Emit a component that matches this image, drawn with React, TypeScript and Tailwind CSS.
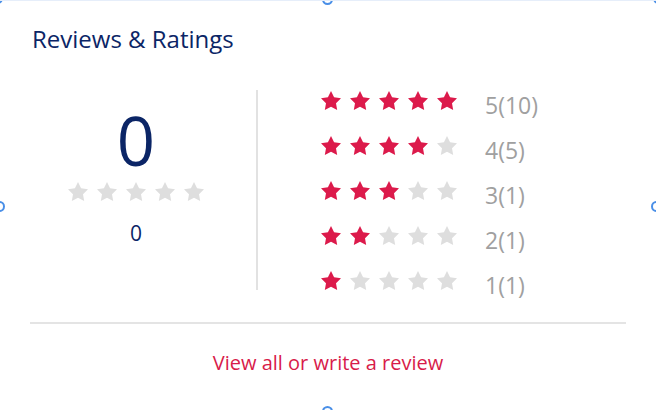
import React from "react";

const STAR =
  "M12 2l3.09 6.26L22 9.27l-5 4.87 1.18 6.88L12 17.77l-6.18 3.25L7 14.14 2 9.27l6.91-1.01L12 2z";

function Star({ filled, size = 24 }: { filled: boolean; size?: number }) {
  return (
    <svg width={size} height={size} viewBox="0 0 24 24" className="shrink-0">
      <path d={STAR} fill={filled ? "#dc1a4b" : "#dedede"} />
    </svg>
  );
}

const rows = [
  { stars: 5, label: "5(10)" },
  { stars: 4, label: "4(5)" },
  { stars: 3, label: "3(1)" },
  { stars: 2, label: "2(1)" },
  { stars: 1, label: "1(1)" },
];

function Handle({ className }: { className: string }) {
  return (
    <div
      className={`absolute w-[11px] h-[11px] rounded-full border-2 border-[#4a8fe7] bg-white ${className}`}
    />
  );
}

export default function App() {
  return (
    <div
      className="relative w-[656px] h-[410px] overflow-hidden bg-white border-t border-[#e6eefa]"
      style={{ fontFamily: '"Open Sans", "Noto Sans", sans-serif' }}
    >
      <div className="flex flex-col h-full px-[30px]">
        <h1 className="pt-[22px] pl-[2px] text-[24px] leading-[32px] text-[#0b2566]">
          Reviews &amp; Ratings
        </h1>

        <div className="flex mt-[35px] h-[200px]">
          <div className="w-[212px] flex flex-col items-center pt-[17px]">
            <div className="text-[67px] leading-none text-[#0b2566]">0</div>
            <div className="flex gap-[5px] mt-[6px]">
              {[0, 1, 2, 3, 4].map((i) => (
                <Star key={i} filled={false} size={24} />
              ))}
            </div>
            <div className="text-[21px] leading-none text-[#0b2566] mt-[19px]">0</div>
          </div>

          <div className="ml-[14px] w-[2px] h-[200px] bg-[#e2e2e2]" />

          <div className="flex flex-col pl-[61px] gap-[21px] -mt-[1px]">
            {rows.map((r) => (
              <div key={r.label} className="flex items-center h-[24px]">
                <div className="flex gap-[5px]">
                  {[0, 1, 2, 3, 4].map((i) => (
                    <Star key={i} filled={i < r.stars} />
                  ))}
                </div>
                <span className="ml-[26px] mt-[8px] text-[23px] leading-none text-[#a0a0a0]">
                  {r.label}
                </span>
              </div>
            ))}
          </div>
        </div>

        <div className="mt-[32px] h-[2px] bg-[#e4e4e4]" />

        <div className="flex justify-center mt-[26px]">
          <a className="text-[20px] leading-[26px] text-[#d81b4a] cursor-pointer">
            View all or write a review
          </a>
        </div>
      </div>

      <Handle className="left-[322px] -top-[7px]" />
      <Handle className="-left-[6px] top-[200px]" />
      <Handle className="-right-[6px] top-[200px]" />
      <Handle className="left-[322px] -bottom-[7px]" />
      <Handle className="-left-[8px] -top-[8px]" />
      <Handle className="-right-[8px] -top-[8px]" />
    </div>
  );
}
